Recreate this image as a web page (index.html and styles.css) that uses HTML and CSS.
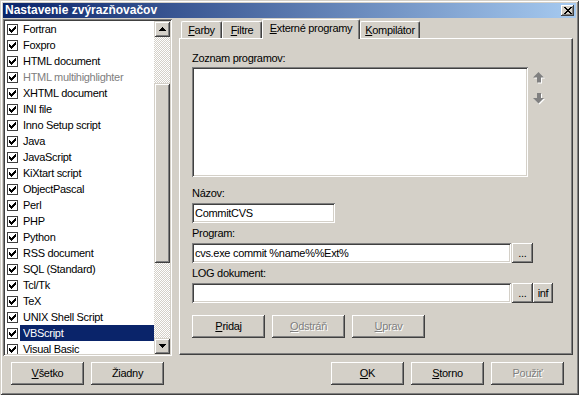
FILE: index.html
```html
<!DOCTYPE html>
<html lang="sk">
<head>
<meta charset="utf-8">
<title>Nastavenie zvýrazňovačov</title>
<link rel="stylesheet" href="styles.css">
</head>
<body>
<svg width="0" height="0" class="defs">
  <defs>
    <symbol id="chk" viewBox="0 0 7 7"><path d="M6 0h1v1H6zM5 1h2v1H5zM0 2h1v1H0zM4 2h3v1H4zM0 3h2v1H0zM3 3h3v1H3zM0 4h5v1H0zM1 5h3v1H1zM2 6h1v1H2z"/></symbol>
  </defs>
</svg>
<div class="window">
  <div class="titlebar">
    <span class="title">Nastavenie zvýrazňovačov</span>
    <span class="close"><svg width="8" height="7" viewBox="0 0 8 7"><path d="M0 0h2v1H0zM6 0h2v1H6zM1 1h2v1H1zM5 1h2v1H5zM2 2h4v1H2zM3 3h2v1H3zM2 4h4v1H2zM1 5h2v1H1zM5 5h2v1H5zM0 6h2v1H0zM6 6h2v1H6z"/></svg></span>
  </div>

  <div class="main">
    <div class="list sunken">
      <div class="items">
        <div class="row"><span class="cb"><svg width="7" height="7"><use href="#chk"/></svg></span><span class="txt">Fortran</span></div>
        <div class="row"><span class="cb"><svg width="7" height="7"><use href="#chk"/></svg></span><span class="txt">Foxpro</span></div>
        <div class="row"><span class="cb"><svg width="7" height="7"><use href="#chk"/></svg></span><span class="txt">HTML document</span></div>
        <div class="row dim"><span class="cb"><svg width="7" height="7"><use href="#chk"/></svg></span><span class="txt">HTML multihighlighter</span></div>
        <div class="row"><span class="cb"><svg width="7" height="7"><use href="#chk"/></svg></span><span class="txt">XHTML document</span></div>
        <div class="row"><span class="cb"><svg width="7" height="7"><use href="#chk"/></svg></span><span class="txt">INI file</span></div>
        <div class="row"><span class="cb"><svg width="7" height="7"><use href="#chk"/></svg></span><span class="txt">Inno Setup script</span></div>
        <div class="row"><span class="cb"><svg width="7" height="7"><use href="#chk"/></svg></span><span class="txt">Java</span></div>
        <div class="row"><span class="cb"><svg width="7" height="7"><use href="#chk"/></svg></span><span class="txt">JavaScript</span></div>
        <div class="row"><span class="cb"><svg width="7" height="7"><use href="#chk"/></svg></span><span class="txt">KiXtart script</span></div>
        <div class="row"><span class="cb"><svg width="7" height="7"><use href="#chk"/></svg></span><span class="txt">ObjectPascal</span></div>
        <div class="row"><span class="cb"><svg width="7" height="7"><use href="#chk"/></svg></span><span class="txt">Perl</span></div>
        <div class="row"><span class="cb"><svg width="7" height="7"><use href="#chk"/></svg></span><span class="txt">PHP</span></div>
        <div class="row"><span class="cb"><svg width="7" height="7"><use href="#chk"/></svg></span><span class="txt">Python</span></div>
        <div class="row"><span class="cb"><svg width="7" height="7"><use href="#chk"/></svg></span><span class="txt">RSS document</span></div>
        <div class="row"><span class="cb"><svg width="7" height="7"><use href="#chk"/></svg></span><span class="txt">SQL (Standard)</span></div>
        <div class="row"><span class="cb"><svg width="7" height="7"><use href="#chk"/></svg></span><span class="txt">Tcl/Tk</span></div>
        <div class="row"><span class="cb"><svg width="7" height="7"><use href="#chk"/></svg></span><span class="txt">TeX</span></div>
        <div class="row"><span class="cb"><svg width="7" height="7"><use href="#chk"/></svg></span><span class="txt">UNIX Shell Script</span></div>
        <div class="row sel"><span class="cb"><svg width="7" height="7"><use href="#chk"/></svg></span><span class="txt">VBScript</span></div>
        <div class="row"><span class="cb"><svg width="7" height="7"><use href="#chk"/></svg></span><span class="txt">Visual Basic</span></div>
      </div>
      <div class="scrollbar">
        <div class="sbtn"><svg width="7" height="4" viewBox="0 0 7 4"><path d="M3 0h1v1H3zM2 1h3v1H2zM1 2h5v1H1zM0 3h7v1H0z"/></svg></div>
        <div class="track track-top"></div>
        <div class="thumb"></div>
        <div class="track track-bottom"></div>
        <div class="sbtn"><svg width="7" height="4" viewBox="0 0 7 4"><path d="M0 0h7v1H0zM1 1h5v1H1zM2 2h3v1H2zM3 3h1v1H3z"/></svg></div>
      </div>
    </div>

    <div class="tabctrl">
      <div class="tabstrip">
        <div class="tab tab-farby"><u>F</u>arby</div>
        <div class="tab tab-filtre"><u>F</u>iltre</div>
        <div class="tab tab-ext active"><u>E</u>xterné programy</div>
        <div class="tab tab-komp"><u>K</u>ompilátor</div>
      </div>
      <div class="panel">
        <div class="lbl">Zoznam programov:</div>
        <div class="prog-row">
          <div class="plist sunken"></div>
          <div class="arrows">
            <svg class="arrow" width="12" height="12" viewBox="0 0 12 12"><path fill="#fff" d="M6.5 1L12 6.5H9V11.5H5V6.5H1z"/><path fill="#808080" d="M5.5 0L11 5.5H8V10.5H4V5.5H0z"/></svg>
            <svg class="arrow" width="12" height="12" viewBox="0 0 12 12"><path fill="#fff" d="M6.5 11.5L12 6H9V1H5V6H1z"/><path fill="#808080" d="M5.5 10.5L11 5H8V0H4V5H0z"/></svg>
          </div>
        </div>

        <div class="lbl gap-lbl">Názov:</div>
        <div class="field-row">
          <div class="input sunken w-name">CommitCVS</div>
        </div>

        <div class="lbl gap-lbl2">Program:</div>
        <div class="field-row">
          <div class="input sunken w-long">cvs.exe commit %name%%Ext%</div>
          <div class="btn small">...</div>
        </div>

        <div class="lbl gap-lbl2">LOG dokument:</div>
        <div class="field-row">
          <div class="input sunken w-long"></div>
          <div class="btn small">...</div>
          <div class="btn small inf">inf</div>
        </div>

        <div class="btn-row">
          <div class="btn"><u>P</u>ridaj</div>
          <div class="btn disabled"><u>O</u>dstráň</div>
          <div class="btn disabled"><u>U</u>prav</div>
        </div>
      </div>
    </div>
  </div>

  <div class="footer">
    <div class="group">
      <div class="btn"><u>V</u>šetko</div>
      <div class="btn">Žiadny</div>
    </div>
    <div class="group">
      <div class="btn"><u>O</u>K</div>
      <div class="btn"><u>S</u>torno</div>
      <div class="btn disabled">Použiť</div>
    </div>
  </div>
</div>
</body>
</html>
```

FILE: styles.css
```css
* { box-sizing: border-box; }
html, body { margin: 0; padding: 0; }
body {
  width: 579px;
  height: 395px;
  overflow: hidden;
  background: #d4d0c8;
  font-family: "Liberation Sans", Arial, sans-serif;
  font-size: 11px;
  line-height: 13px;
  letter-spacing: -0.3px;
  color: #000;
}
.defs { position: absolute; }
u { text-decoration: underline; text-underline-offset: 1px; }

.window {
  width: 579px;
  height: 395px;
  padding: 3px;
  background: #d4d0c8;
  box-shadow: inset 1px 1px #d4d0c8, inset -1px -1px #404040, inset 2px 2px #fff, inset -2px -2px #808080;
  display: flex;
  flex-direction: column;
}

.titlebar {
  height: 15px;
  background: linear-gradient(to right, #0a246a, #a6caf0);
  display: flex;
  align-items: center;
  justify-content: space-between;
  padding-left: 2px;
}
.title {
  color: #fff;
  font-weight: bold;
  font-size: 12px;
  letter-spacing: 0;
}
.close {
  width: 13px;
  height: 11px;
  margin-right: 2px;
  background: #d4d0c8;
  box-shadow: inset -1px -1px #404040, inset 1px 1px #fff, inset -2px -2px #808080;
  display: flex;
  align-items: center;
  justify-content: center;
}
.close svg { display: block; }

.sunken {
  background: #fff;
  box-shadow: inset 1px 1px #808080, inset -1px -1px #fff, inset 2px 2px #404040, inset -2px -2px #d4d0c8;
}

.main {
  display: flex;
  margin-top: 1px;
  height: 337px;
}

.list {
  width: 169px;
  height: 337px;
  padding: 2px;
  display: flex;
}
.items {
  flex: 1;
  overflow: hidden;
  min-width: 0;
}
.row {
  height: 16px;
  display: flex;
  align-items: center;
  padding-left: 2px;
  white-space: nowrap;
}
.cb {
  width: 11px;
  height: 11px;
  border: 1px solid #404040;
  background: #fff;
  margin-right: 2px;
  display: flex;
  align-items: center;
  justify-content: center;
  flex: none;
}
.cb svg { display: block; }
.txt {
  flex: 1;
  height: 16px;
  line-height: 16px;
  padding-left: 3px;
}
.row.dim .txt { color: #808080; }
.row.sel .txt { background: #0a246a; color: #fff; }

.scrollbar {
  width: 16px;
  display: flex;
  flex-direction: column;
}
.sbtn, .thumb {
  background: #d4d0c8;
  box-shadow: inset 1px 1px #d4d0c8, inset -1px -1px #404040, inset 2px 2px #fff, inset -2px -2px #808080;
}
.sbtn {
  height: 16px;
  display: flex;
  align-items: center;
  justify-content: center;
  flex: none;
}
.sbtn svg { display: block; }
.track {
  background: repeating-conic-gradient(#fff 0 25%, #d4d0c8 0 50%) 0 0 / 2px 2px;
}
.track-top { height: 46px; }
.thumb { height: 180px; flex: none; }
.track-bottom { flex: 1; }

.tabctrl {
  margin-left: 7px;
  width: 394px;
  display: flex;
  flex-direction: column;
}
.tabstrip {
  height: 19px;
  display: flex;
  align-items: flex-end;
  padding-left: 2px;
}
.tab {
  height: 17px;
  border-left: 1px solid #fff;
  border-top: 1px solid #fff;
  border-right: 1px solid #404040;
  border-radius: 2px 2px 0 0;
  box-shadow: inset -1px 0 #808080;
  display: flex;
  align-items: center;
  justify-content: center;
  padding-top: 1px;
  white-space: nowrap;
}
.tab-farby { width: 41px; }
.tab-filtre { width: 40px; }
.tab-ext { width: 98px; }
.tab-komp { width: 60px; }
.tab.active {
  height: 20px;
  margin-bottom: -1px;
  position: relative;
  z-index: 1;
  background: #d4d0c8;
  padding-top: 0;
  padding-bottom: 2px;
}

.panel {
  height: 317px;
  border-top: 1px solid #fff;
  border-left: 1px solid #fff;
  border-right: 1px solid #404040;
  border-bottom: 1px solid #404040;
  box-shadow: inset -1px -1px #808080;
  padding: 13px 0 0 12px;
}
.lbl { height: 13px; white-space: nowrap; }
.prog-row {
  display: flex;
  margin-top: 2px;
}
.plist { width: 336px; height: 110px; }
.arrows {
  margin-left: 5px;
  padding-top: 5px;
  display: flex;
  flex-direction: column;
  gap: 9px;
}
.arrow { display: block; }

.gap-lbl { margin-top: 10px; }
.gap-lbl2 { margin-top: 4px; }
.field-row {
  display: flex;
  margin-top: 3px;
}
.input {
  height: 20px;
  padding: 0 3px;
  line-height: 20px;
  white-space: nowrap;
  overflow: hidden;
}
.w-name { width: 143px; }
.w-long { width: 319px; margin-right: 1px; }

.btn {
  width: 73px;
  height: 23px;
  background: #d4d0c8;
  box-shadow: inset -1px -1px #404040, inset 1px 1px #fff, inset -2px -2px #808080;
  display: flex;
  align-items: center;
  justify-content: center;
  white-space: nowrap;
  flex: none;
}
.btn.small { width: 21px; height: 20px; }
.btn.small.inf { width: 20px; }
.btn.disabled { color: #808080; text-shadow: 1px 1px #fff; }

.btn-row {
  display: flex;
  gap: 7px;
  margin-top: 12px;
}

.footer {
  display: flex;
  justify-content: space-between;
  margin-top: 6px;
  padding: 0 12px 0 8px;
}
.group { display: flex; gap: 7px; }
```
